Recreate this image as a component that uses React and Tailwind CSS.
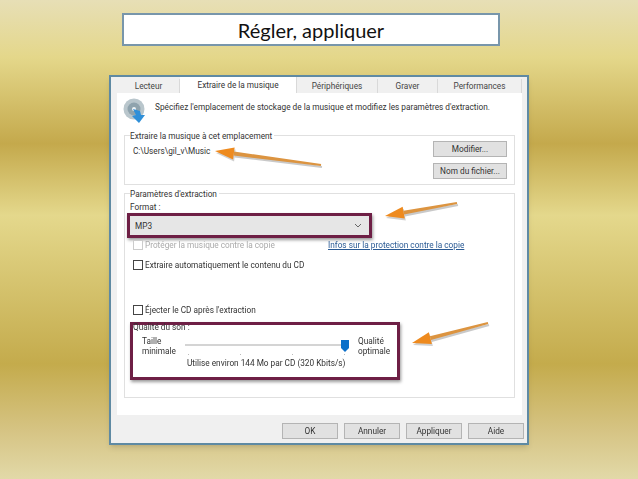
const arrows = [
  { tail: [321, 165], tip: [215, 151] },
  { tail: [457, 203], tip: [385, 216] },
  { tail: [488, 323], tip: [412, 343] },
]

function Arrows() {
  return (
    <svg className="absolute left-0 top-0 blur-[0.4px]" width="638" height="479" viewBox="0 0 638 479">
      {arrows.map(({ tail, tip }, i) => {
        const dx = tip[0] - tail[0]
        const dy = tip[1] - tail[1]
        const len = Math.hypot(dx, dy)
        const ux = dx / len
        const uy = dy / len
        const bx = tip[0] - ux * 19
        const by = tip[1] - uy * 19
        const head = `${tip[0]},${tip[1]} ${bx - uy * 6},${by + ux * 6} ${bx + uy * 6},${by - ux * 6}`
        // shaft gets thinner towards the tail
        const shaft = `${bx - uy * 2},${by + ux * 2} ${bx + uy * 2},${by - ux * 2} ${tail[0] + uy},${tail[1] - ux} ${tail[0] - uy},${tail[1] + ux}`
        return (
          <g key={i}>
            <polygon points={shaft} fill="#777" fillOpacity="0.4" transform="translate(1 2)" />
            <polygon points={head} fill="#777" fillOpacity="0.35" transform="translate(1 2)" />
            <polygon points={shaft} fill="#dc9440" />
            <polygon points={head} fill="#ee8a1e" />
          </g>
        )
      })}
    </svg>
  )
}

function Tab({ label, width, active }) {
  return (
    <div
      className={
        active
          ? 'h-[16px] -mt-[2px] flex items-center justify-center bg-white border-r border-[#d9d9d9] leading-[12px] text-[#333]'
          : 'h-[14px] flex items-center justify-center bg-[#f0f0f0] border-r border-[#d9d9d9] leading-[12px] text-[#444]'
      }
      style={{ width }}
    >
      {label}
    </div>
  )
}

function Button({ label, width }) {
  return (
    <div
      className="h-[16px] flex items-center justify-center bg-[#e1e1e1] border border-[#b4b4b4] leading-[12px] text-[#333]"
      style={{ width }}
    >
      {label}
    </div>
  )
}

function Check({ label, disabled }) {
  return (
    <div className={disabled ? 'flex items-center gap-[2px] h-[12px] leading-[12px] text-[#aaa]' : 'flex items-center gap-[2px] h-[12px] leading-[12px] text-[#333]'}>
      <div className={disabled ? 'w-[10px] h-[10px] border border-[#ccc] bg-white' : 'w-[10px] h-[10px] border border-[#444] bg-white'} />
      <span>{label}</span>
    </div>
  )
}

export default function App() {
  return (
    <div className="relative w-[638px] h-[479px] overflow-hidden flex flex-col items-center bg-[linear-gradient(to_bottom,#e7dfb6_0%,#e4d78a_12%,#c4a94c_30%,#e4d88c_45%,#c4ab4c_76%,#d6c484_90%,#e2d9a8_100%)] font-['Roboto',sans-serif]">
      {/* Title */}
      <div className="mt-[13px] ml-[-16px] w-[378px] h-[33px] flex items-center justify-center bg-white border-2 border-[#7896ab] text-[20px] text-[#111] font-['Lato',sans-serif]">
        Régler, appliquer
      </div>

      {/* Dialog */}
      <div className="mt-[29px] w-[420px] h-[370px] flex flex-col bg-[#f0f0f0] border-2 border-[#5f8aa3] shadow-md text-[8.25px] blur-[0.4px]">
        <div className="flex pl-[7px] pt-[2px] shrink-0">
          <Tab label="Lecteur" width={62} />
          <Tab label="Extraire de la musique" width={117} active />
          <Tab label="Périphériques" width={81} />
          <Tab label="Graver" width={60} />
          <Tab label="Performances" width={84} />
        </div>

        {/* Page */}
        <div className="ml-[6px] w-[405px] h-[322px] bg-white flex flex-col px-[7px] text-[#333]">
          <div className="flex items-start gap-[9px] pt-[5px] h-[42px] -ml-[1px]">
            <svg width="23" height="25" viewBox="0 0 23 25">
              <circle cx="11" cy="11" r="10.5" fill="#b9c6cc" />
              <circle cx="11" cy="11" r="6.5" fill="#8fa3ad" />
              <circle cx="11" cy="11" r="2" fill="#eef2f4" />
              <path d="M10 11 L17 13 L18 17 L22 17 L16 25 L9 18 L13 17 Z" fill="#2f8fd8" />
            </svg>
            <span className="mt-[3px] leading-[12px] whitespace-nowrap">Spécifiez l'emplacement de stockage de la musique et modifiez les paramètres d'extraction.</span>
          </div>

          <div className="h-[50px] border border-[#e0e0e0] flex justify-between pl-[5px] pr-[7px]">
            <div>
              <div className="-mt-[6px] w-fit bg-white pr-[2px] leading-[12px]">Extraire la musique à cet emplacement</div>
              <div className="mt-[3px] ml-[3px] leading-[12px]">C:\Users\gil_v\Music</div>
            </div>
            <div className="flex flex-col gap-[6px] pt-[5px]">
              <Button label="Modifier..." width={74} />
              <Button label="Nom du fichier..." width={74} />
            </div>
          </div>

          <div className="mt-[8px] h-[205px] border border-[#e0e0e0] flex flex-col">
            <div className="-mt-[6px] ml-[5px] w-fit bg-white pr-[2px] leading-[12px]">Paramètres d'extraction</div>
            <div className="ml-[5px] mt-[2px] h-[11px] leading-[11px]">Format :</div>
            <div className="ml-[2px] w-[245px] h-[25px] border-[3px] border-[#6e1f45] shadow-[1px_2px_3px_rgba(0,0,0,0.4)] bg-[#e6e6e6] flex items-center justify-between pl-[5px] pr-[7px]">
              <span className="leading-[12px]">MP3</span>
              <svg width="8" height="5" viewBox="0 0 8 5">
                <path d="M1 1 L4 4 L7 1" fill="none" stroke="#666" strokeWidth="1" />
              </svg>
            </div>
            <div className="flex mt-[1px] ml-[8px]">
              <div className="w-[195px]"><Check label="Protéger la musique contre la copie" disabled /></div>
              <span className="text-[#2a5a94] underline leading-[12px]">Infos sur la protection contre la copie</span>
            </div>
            <div className="mt-[8px] ml-[8px]"><Check label="Extraire automatiquement le contenu du CD" /></div>
            <div className="mt-[33px] ml-[8px]"><Check label="Éjecter le CD après l'extraction" /></div>

            {/* Qualité du son */}
            <div className="mt-[6px] ml-[5px] w-[270px] h-[58px] border-[3px] border-[#6e1f45] shadow-[1px_2px_3px_rgba(0,0,0,0.4)] bg-white flex flex-col">
              <div className="-mt-[3px] leading-[11px] text-[#333]">Qualité du son :</div>
              <div className="flex pl-[9px] pt-[3px] leading-[10px]">
                <div className="w-[43px]">Taille<br />minimale</div>
                <div className="w-[164px] h-[20px] relative">
                  <div className="mt-[8px] h-[2px] bg-[#d4d4d4]" />
                  <div className="mt-[8px] flex justify-between pl-[3px] pr-[4px]">
                    <div className="w-[1px] h-[1px] bg-[#bbb]" />
                    <div className="w-[1px] h-[1px] bg-[#bbb]" />
                    <div className="w-[1px] h-[1px] bg-[#bbb]" />
                    <div className="w-[1px] h-[1px] bg-[#bbb]" />
                  </div>
                  <svg className="absolute right-0 top-[4px]" width="8" height="12" viewBox="0 0 8 12">
                    <path d="M0 0 H8 V8 L4 12 L0 8 Z" fill="#0a6fc9" />
                  </svg>
                </div>
                <div className="ml-[9px]">Qualité<br />optimale</div>
              </div>
              <div className="ml-[54px] mt-[2px] leading-[11px]">Utilise environ 144 Mo par CD (320 Kbits/s)</div>
            </div>
          </div>
        </div>

        {/* Footer */}
        <div className="flex justify-end gap-[6px] pt-[8px] pr-[3px]">
          <Button label="OK" width={56} />
          <Button label="Annuler" width={56} />
          <Button label="Appliquer" width={56} />
          <Button label="Aide" width={56} />
        </div>
      </div>

      <Arrows />
    </div>
  )
}
